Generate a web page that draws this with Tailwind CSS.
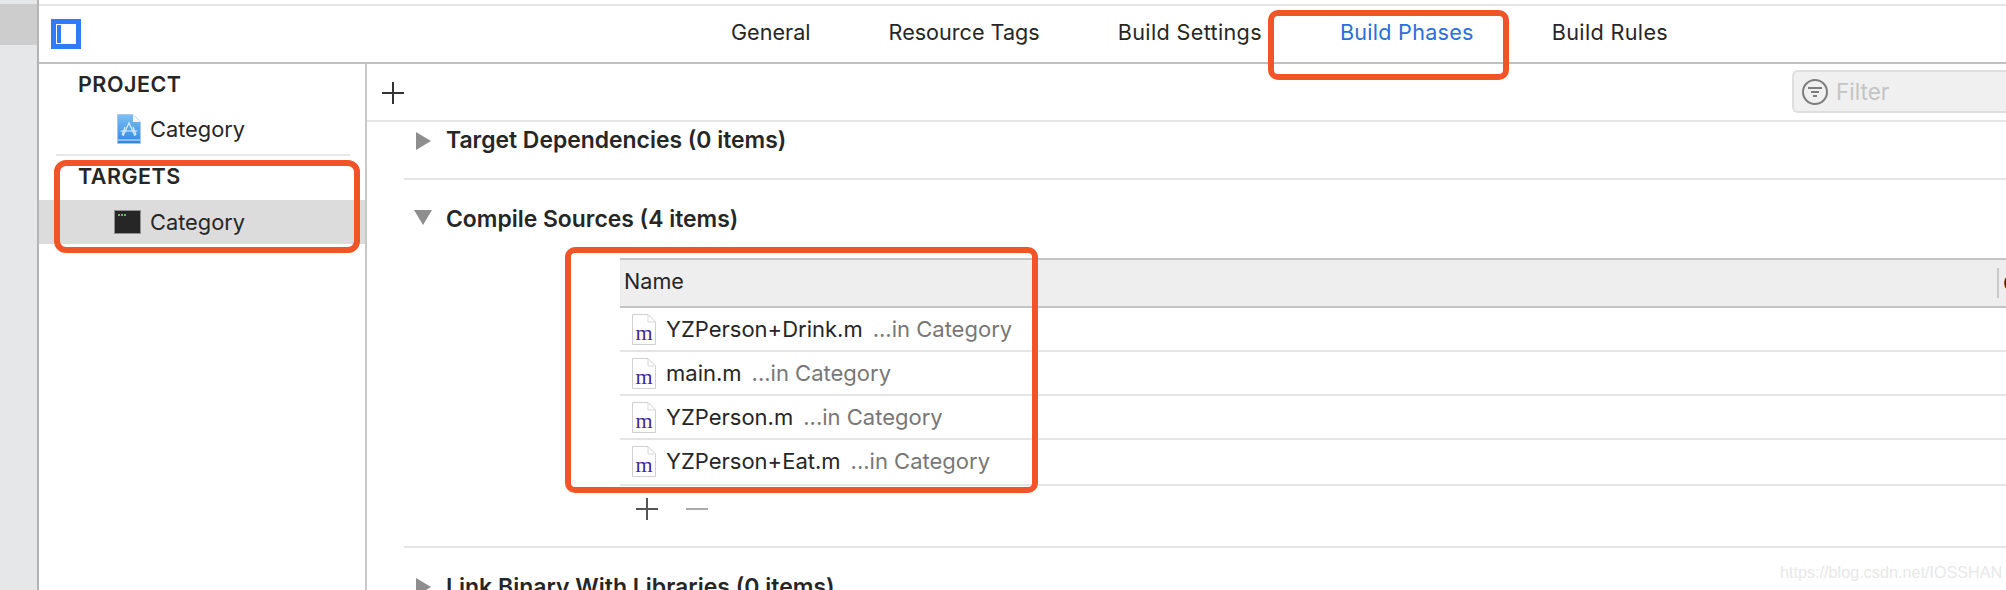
<!DOCTYPE html>
<html lang="en">
<head>
    <meta charset="UTF-8">
    <title>Build Phases</title>
    <script src="https://cdn.jsdelivr.net/npm/@tailwindcss/browser@4"></script>
</head>
<body class="bg-white">
<div class="relative flex h-[590px] w-[2006px] overflow-hidden bg-white font-['Inter',sans-serif] text-[21.6px] text-[#262626]">

    <!-- Left strip -->
    <div class="w-[39px] shrink-0 border-r-2 border-[#b4b4b4] bg-[#e6e7e8] pt-[4px]">
        <div class="h-[41px] bg-[#cdcdcd]"></div>
    </div>

    <div class="flex min-w-0 flex-1 flex-col">
        <!-- Tab bar -->
        <header class="mt-[4px] flex h-[60px] shrink-0 items-center border-y-2 border-t-[#e5e5e5] border-b-[#c0c0c0] pl-[12px]">
            <div class="flex h-[30px] w-[30px] shrink-0 border-[5px] border-[#2f7df6] p-px">
                <div class="h-full w-[4px] bg-[#2f7df6]"></div>
            </div>
            <nav class="ml-[650px] flex gap-[78px] pb-[4px] text-[21.6px]">
                <a>General</a>
                <a>Resource Tags</a>
                <a class="tracking-[0.35px]">Build Settings</a>
                <a class="tracking-[0.25px] text-[#2a6fdb]">Build Phases</a>
                <a class="tracking-[0.35px]">Build Rules</a>
            </nav>
        </header>

        <div class="flex min-h-0 flex-1">
            <!-- Sidebar -->
            <aside class="w-[328px] shrink-0 border-r-2 border-[#c8c8c8]">
                <div class="flex h-[40px] items-center pl-[39px] text-[21.5px] font-semibold tracking-[0.5px]">PROJECT</div>
                <div class="flex h-[50px] items-center pl-[78px]">
                    <svg class="mr-[9px] h-[30px] w-[24px]" viewBox="0 0 24 30">
                        <defs>
                            <linearGradient id="proj" x1="0" y1="0" x2="0" y2="1">
                                <stop offset="0" stop-color="#7cc0f5"/>
                                <stop offset="1" stop-color="#2f86e4"/>
                            </linearGradient>
                        </defs>
                        <path d="M.5.5H16L23.5 8V29.5H.5Z" fill="url(#proj)" stroke="#a9c9e6"/>
                        <path d="M16 .5V8H23.5Z" fill="#eef5fb"/>
                        <path d="M6 22 12 9 18 22M3.5 17H20.5M8 13 5 21M16 13 19 21" fill="none" stroke="#dcefff" stroke-width="1.2"/>
                        <path d="M1 26H23" stroke="#dcefff"/>
                    </svg>
                    <span class="text-[21.8px]">Category</span>
                </div>
                <div class="ml-[17px] h-[2px] w-[294px] bg-[#e8e8e8]"></div>
                <div class="flex h-[44px] items-center pb-[4px] pl-[39px] text-[21.5px] font-semibold tracking-[0.5px]">TARGETS</div>
                <div class="flex h-[44px] items-center bg-[#dcdcdc] pl-[75px]">
                    <svg class="mr-[9px] h-[24px] w-[27px]" viewBox="0 0 27 24">
                        <rect x=".5" y=".5" width="26" height="23" fill="#262626" stroke="#8f8f8f"/>
                        <path d="M4 5H13" stroke="#5fbf5f" stroke-width="2" stroke-dasharray="2 1"/>
                    </svg>
                    <span class="text-[21.8px]">Category</span>
                </div>
            </aside>

            <!-- Build phases -->
            <main class="min-w-0 flex-1">
                <div class="flex h-[58px] items-start border-b-2 border-[#e5e5e5] pt-[6px]">
                    <svg class="ml-[15px] mt-[12px] h-[22px] w-[22px]" viewBox="0 0 22 22">
                        <path d="M0 11H22M11 0V22" stroke="#333" stroke-width="2"/>
                    </svg>
                    <div class="ml-auto flex h-[43px] w-[214px] items-center rounded-l-[6px] border-y-2 border-l-2 border-[#dedede] bg-[#f0f0f0] pl-[8px] text-[22.5px] text-[#c4c4c4]">
                        <svg class="mr-[8px] h-[26px] w-[26px]" viewBox="0 0 26 26" fill="none" stroke="#7d7d7d">
                            <circle cx="13" cy="13" r="12" stroke-width="2"/>
                            <path d="M6 9H20M9 13H17M11 17H15" stroke-width="2"/>
                        </svg>
                        <span>Filter</span>
                    </div>
                </div>

                <section class="ml-[37px]">
                    <div class="flex h-[58px] border-b-2 border-[#e5e5e5] pl-[12px]">
                        <div class="flex h-[37px] items-center text-[22.9px] font-semibold">
                            <svg class="mr-[15px] h-[18px] w-[15px]" viewBox="0 0 15 18"><path d="M0 0 15 9 0 18Z" fill="#8e8e8e"/></svg>
                            <span>Target Dependencies (0 items)</span>
                        </div>
                    </div>

                    <div class="border-b-2 border-[#e5e5e5]">
                        <div class="flex h-[78px] items-start pl-[10px] pt-[22px] text-[22.9px] font-semibold">
                            <svg class="mr-[14px] mt-[8px] h-[15px] w-[18px]" viewBox="0 0 18 15"><path d="M0 0H18L9 15Z" fill="#8e8e8e"/></svg>
                            <span>Compile Sources (4 items)</span>
                        </div>

                        <div class="ml-[216px]">
                            <div class="flex h-[50px] items-center justify-between border-y-2 border-t-[#c4c4c4] border-b-[#c4c4c4] bg-[#eeeeee] pl-[4px]">
                                <span class="pb-[3px]">Name</span>
                                <div class="h-[30px] w-[9px] overflow-hidden border-l-2 border-[#c8c8c8] pl-[4px] leading-[30px]">C</div>
                            </div>

                            <div class="flex h-[44px] items-center border-b-2 border-[#e5e5e5] pl-[12px] text-[22px]">
                                <svg class="mr-[10px] h-[31px] w-[24px]" viewBox="0 0 24 31">
                                    <path d="M.5.5H16L23.5 8V30.5H.5Z" fill="#fff" stroke="#d0d0d0"/>
                                    <path d="M16 .5V8H23.5" fill="none" stroke="#d8d8d8"/>
                                    <text x="12" y="26" text-anchor="middle" font-family="Liberation Serif" font-size="22" fill="#3f2a96">m</text>
                                </svg>
                                <span>YZPerson+Drink.m</span>
                                <span class="ml-[10px] text-[#777777]">...in Category</span>
                            </div>
                            <div class="flex h-[44px] items-center border-b-2 border-[#e5e5e5] pl-[12px] text-[22px]">
                                <svg class="mr-[10px] h-[31px] w-[24px]" viewBox="0 0 24 31">
                                    <path d="M.5.5H16L23.5 8V30.5H.5Z" fill="#fff" stroke="#d0d0d0"/>
                                    <path d="M16 .5V8H23.5" fill="none" stroke="#d8d8d8"/>
                                    <text x="12" y="26" text-anchor="middle" font-family="Liberation Serif" font-size="22" fill="#3f2a96">m</text>
                                </svg>
                                <span>main.m</span>
                                <span class="ml-[10px] text-[#777777]">...in Category</span>
                            </div>
                            <div class="flex h-[44px] items-center border-b-2 border-[#e5e5e5] pl-[12px] text-[22px]">
                                <svg class="mr-[10px] h-[31px] w-[24px]" viewBox="0 0 24 31">
                                    <path d="M.5.5H16L23.5 8V30.5H.5Z" fill="#fff" stroke="#d0d0d0"/>
                                    <path d="M16 .5V8H23.5" fill="none" stroke="#d8d8d8"/>
                                    <text x="12" y="26" text-anchor="middle" font-family="Liberation Serif" font-size="22" fill="#3f2a96">m</text>
                                </svg>
                                <span>YZPerson.m</span>
                                <span class="ml-[10px] text-[#777777]">...in Category</span>
                            </div>
                            <div class="flex h-[46px] items-center border-b-2 border-[#e5e5e5] pb-[2px] pl-[12px] text-[22px]">
                                <svg class="mr-[10px] h-[31px] w-[24px]" viewBox="0 0 24 31">
                                    <path d="M.5.5H16L23.5 8V30.5H.5Z" fill="#fff" stroke="#d0d0d0"/>
                                    <path d="M16 .5V8H23.5" fill="none" stroke="#d8d8d8"/>
                                    <text x="12" y="26" text-anchor="middle" font-family="Liberation Serif" font-size="22" fill="#3f2a96">m</text>
                                </svg>
                                <span>YZPerson+Eat.m</span>
                                <span class="ml-[10px] text-[#777777]">...in Category</span>
                            </div>

                            <div class="flex h-[60px] items-start gap-[28px] pl-[16px] pt-[12px]">
                                <svg class="h-[22px] w-[22px]" viewBox="0 0 22 22"><path d="M0 11H22M11 0V22" stroke="#555" stroke-width="2"/></svg>
                                <svg class="h-[22px] w-[22px]" viewBox="0 0 22 22"><path d="M0 11H22" stroke="#aaa" stroke-width="2"/></svg>
                            </div>
                        </div>
                    </div>

                    <div class="flex items-center pl-[12px] pt-[22px] text-[23px] font-semibold">
                        <svg class="mr-[15px] h-[18px] w-[15px]" viewBox="0 0 15 18"><path d="M0 0 15 9 0 18Z" fill="#8e8e8e"/></svg>
                        <span>Link Binary With Libraries (0 items)</span>
                    </div>
                </section>
            </main>
        </div>
    </div>

    <!-- Red annotation boxes drawn over the screenshot -->
    <div class="absolute left-[1268px] top-[10px] h-[70px] w-[241px] rounded-[10px] border-[6px] border-[#f15527]"></div>
    <div class="absolute left-[54px] top-[160px] h-[93px] w-[306px] rounded-[12px] border-[6px] border-[#f15527]"></div>
    <div class="absolute left-[565px] top-[247px] h-[246px] w-[473px] rounded-[10px] border-[6px] border-[#f15527]"></div>

    <!-- Watermark -->
    <div class="absolute left-[1780px] top-[560px] font-['Liberation_Sans',sans-serif] text-[16.2px] text-[#e8e8e8]">https://blog.csdn.net/IOSSHAN</div>
</div>
</body>
</html>
